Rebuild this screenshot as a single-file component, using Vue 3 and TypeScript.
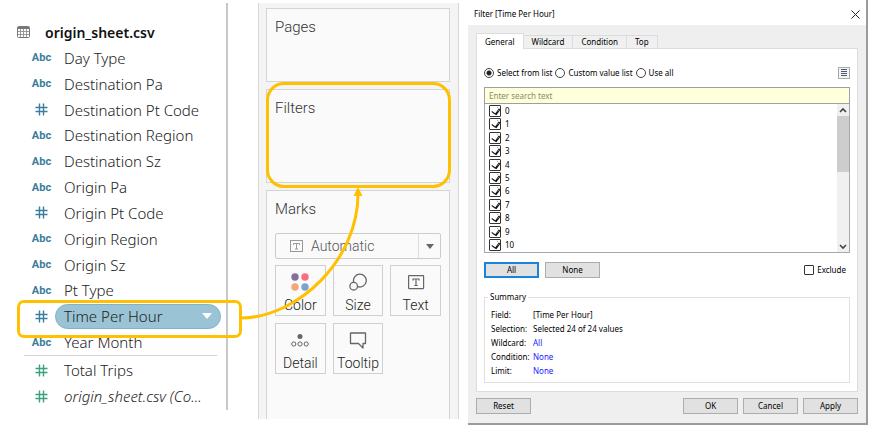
<script setup lang="ts">
import { ref } from 'vue'

type Kind = 'abc' | 'num'
interface Field {
  name: string
  kind: Kind
  active?: boolean
  italic?: boolean
}

const dimensions: Field[] = [
  { name: 'Day Type', kind: 'abc' },
  { name: 'Destination Pa', kind: 'abc' },
  { name: 'Destination Pt Code', kind: 'num' },
  { name: 'Destination Region', kind: 'abc' },
  { name: 'Destination Sz', kind: 'abc' },
  { name: 'Origin Pa', kind: 'abc' },
  { name: 'Origin Pt Code', kind: 'num' },
  { name: 'Origin Region', kind: 'abc' },
  { name: 'Origin Sz', kind: 'abc' },
  { name: 'Pt Type', kind: 'abc' },
  { name: 'Time Per Hour', kind: 'num', active: true },
  { name: 'Year Month', kind: 'abc' },
]
const measures: Field[] = [
  { name: 'Total Trips', kind: 'num' },
  { name: 'origin_sheet.csv (Co...', kind: 'num', italic: true },
]

const tabs = ['General', 'Wildcard', 'Condition', 'Top']
const activeTab = ref('General')
const modes = ['Select from list', 'Custom value list', 'Use all']
const mode = ref('Select from list')
const search = ref('')
const hours = ref(Array.from({ length: 11 }, (_, i) => ({ label: String(i), checked: true })))
const exclude = ref(false)
const mark = ref('Automatic')

const summary = [
  { label: 'Field:', value: '[Time Per Hour]', link: false },
  { label: 'Selection:', value: 'Selected 24 of 24 values', link: false },
  { label: 'Wildcard:', value: 'All', link: true },
  { label: 'Condition:', value: 'None', link: true },
  { label: 'Limit:', value: 'None', link: true },
]

function setAll(value: boolean) {
  hours.value.forEach((h) => (h.checked = value))
}
</script>

<template>
  <main class="page">
    <section class="data">
      <h2 class="source">
        <svg width="13" height="12" viewBox="0 0 13 12" fill="none" stroke="#777">
          <rect x="0.5" y="0.5" width="12" height="11" rx="1" />
          <path d="M1 2H12" stroke-width="2" />
          <path d="M1 5.5H12M1 8.5H12M3.5 3V11M6.5 3V11M9.5 3V11" stroke="#999" />
        </svg>
        <span>origin_sheet.csv</span>
      </h2>
      <ul class="fields dimensions">
        <li v-for="f in dimensions" :key="f.name" class="field" :class="{ active: f.active }">
          <span class="kind">
            <template v-if="f.kind === 'abc'">Abc</template>
            <svg v-else width="13" height="13" viewBox="0 0 13 13" fill="none" stroke="currentColor" stroke-width="1.4">
              <path d="M4.5 0.5V12.5M8.5 0.5V12.5M0.5 4.5H12.5M0.5 8.5H12.5" />
            </svg>
          </span>
          <span class="name">{{ f.name }}
            <button v-if="f.active" class="caret" type="button" aria-label="Field menu">
              <svg width="10" height="6" viewBox="0 0 10 6"><path d="M0 0H10L5 6Z" fill="#fff" /></svg>
            </button>
          </span>
        </li>
      </ul>
      <ul class="fields measures">
        <li v-for="f in measures" :key="f.name" class="field" :class="{ italic: f.italic }">
          <span class="kind">
            <svg width="13" height="13" viewBox="0 0 13 13" fill="none" stroke="currentColor" stroke-width="1.4">
              <path d="M4.5 0.5V12.5M8.5 0.5V12.5M0.5 4.5H12.5M0.5 8.5H12.5" />
            </svg>
          </span>
          <span class="name">{{ f.name }}</span>
        </li>
      </ul>
    </section>

    <section class="shelves">
      <div class="card pages"><h3>Pages</h3></div>
      <div class="card filters"><h3>Filters</h3></div>
      <div class="card marks">
        <h3><label for="mark">Marks</label></h3>
        <div class="picker">
          <svg class="picker-icon" width="13" height="12" viewBox="0 0 13 12" fill="none" stroke="#999">
            <rect x="0.5" y="0.5" width="12" height="11" />
            <path d="M3.5 5V3.5H9.5V5M6.5 3.5V9M5 9H8" />
          </svg>
          <select id="mark" v-model="mark">
            <option>Automatic</option>
          </select>
          <span class="picker-arrow">
            <svg width="8" height="5" viewBox="0 0 8 5"><path d="M0 0H8L4 5Z" fill="#666" /></svg>
          </span>
        </div>
        <div class="tiles">
          <button class="tile" type="button">
            <svg width="18" height="18" viewBox="0 0 18 18">
              <circle cx="4" cy="4" r="3.7" fill="#83709b" />
              <circle cx="14" cy="4" r="3.7" fill="#f96e80" />
              <circle cx="4" cy="14" r="3.7" fill="#f3a77b" />
              <circle cx="14" cy="14" r="3.7" fill="#7ca3cc" />
            </svg>
            <span>Color</span>
          </button>
          <button class="tile" type="button">
            <svg width="18" height="18" viewBox="0 0 18 18" fill="none" stroke="#666" stroke-width="1.3">
              <path d="M4.7 9.2A6.4 6.4 0 1 1 8.8 13.6" />
              <circle cx="4.7" cy="13.2" r="3.8" />
            </svg>
            <span>Size</span>
          </button>
          <button class="tile" type="button">
            <svg width="18" height="18" viewBox="0 0 18 18" fill="none" stroke="#666" stroke-width="1.2">
              <rect x="1.6" y="2.6" width="15" height="13" rx="0.5" />
              <path d="M6 7.5V6H12V7.5M9 6V12.5M7.3 12.5H10.7" />
            </svg>
            <span>Text</span>
          </button>
          <button class="tile" type="button">
            <svg width="18" height="18" viewBox="0 0 18 18" fill="none" stroke="#666">
              <circle cx="9" cy="5.5" r="2.5" fill="#666" stroke="none" />
              <circle cx="2.8" cy="13" r="2.1" />
              <circle cx="9" cy="13" r="2.1" />
              <circle cx="15.2" cy="13" r="2.1" />
            </svg>
            <span>Detail</span>
          </button>
          <button class="tile" type="button">
            <svg width="18" height="18" viewBox="0 0 18 18" fill="none" stroke="#666" stroke-width="1.3">
              <path d="M1.500 2H16.500V12.500H14V17L9.500 12.500H1.500Z" stroke-linejoin="round" />
            </svg>
            <span>Tooltip</span>
          </button>
        </div>
      </div>
    </section>

    <section class="dialog" role="dialog" aria-labelledby="dialog-title">
      <header class="titlebar">
        <h1 id="dialog-title">Filter [Time Per Hour]</h1>
        <button class="close" type="button" aria-label="Close">
          <svg width="9" height="9" viewBox="0 0 9 9" stroke="#222" fill="none"><path d="M0.5 0.5L8.5 8.5M8.5 0.5L0.5 8.5" /></svg>
        </button>
      </header>
      <div class="body">
        <nav class="tabs" role="tablist">
          <button
            v-for="t in tabs"
            :key="t"
            type="button"
            role="tab"
            class="tab"
            :class="{ current: t === activeTab }"
            :aria-selected="t === activeTab"
            @click="activeTab = t"
          >{{ t }}</button>
        </nav>
        <div class="pane">
          <div class="modes">
            <label v-for="m in modes" :key="m" class="mode">
              <input v-model="mode" type="radio" name="mode" :value="m" />{{ m }}
            </label>
            <button class="menu" type="button" aria-label="List options">
              <svg width="6" height="8" viewBox="0 0 6 8" stroke="#4c5a6b"><path d="M0 0.5H6M0 2.5H6M0 4.5H6M0 6.5H6" /></svg>
            </button>
          </div>
          <input v-model="search" class="search" type="text" placeholder="Enter search text" aria-label="Enter search text" />
          <div class="list">
            <div class="items">
              <label v-for="h in hours" :key="h.label" class="item">
                <input v-model="h.checked" class="tick" type="checkbox" />{{ h.label }}
              </label>
            </div>
            <div class="scroll">
              <svg width="8" height="12" viewBox="0 0 8 12" fill="none" stroke="#444" stroke-width="1.6"><path d="M1 8L4 5L7 8" /></svg>
              <span class="thumb"></span>
              <svg width="8" height="12" viewBox="0 0 8 12" fill="none" stroke="#444" stroke-width="1.6"><path d="M1 5L4 8L7 5" /></svg>
            </div>
          </div>
          <div class="actions">
            <button class="btn primary" type="button" @click="setAll(true)">All</button>
            <button class="btn" type="button" @click="setAll(false)">None</button>
            <label class="exclude"><input v-model="exclude" class="tick" type="checkbox" />Exclude</label>
          </div>
          <fieldset class="summary">
            <legend>Summary</legend>
            <dl>
              <template v-for="s in summary" :key="s.label">
                <dt>{{ s.label }}</dt>
                <dd :class="{ link: s.link }">{{ s.value }}</dd>
              </template>
            </dl>
          </fieldset>
        </div>
        <footer class="footer">
          <button class="btn reset" type="button">Reset</button>
          <button class="btn" type="button">OK</button>
          <button class="btn" type="button">Cancel</button>
          <button class="btn" type="button">Apply</button>
        </footer>
      </div>
    </section>

    <svg class="arrow" width="130" height="140" viewBox="0 0 130 140" fill="none">
      <path d="M2 134C58 133 118 76 118 10" stroke="#ffc000" stroke-width="3" />
      <path d="M118 3L122.500 12H113.500Z" fill="#ffc000" />
    </svg>
  </main>
</template>

<style>
body {
  background: #fff;
}
</style>

<style scoped>
* {
  box-sizing: border-box;
}
.page {
  position: relative;
  display: flex;
  align-items: flex-start;
  font-family: Roboto, 'Liberation Sans', sans-serif;
  font-size: 15px;
  font-weight: 300;
  color: #222;
}
h1, h2, h3, ul, dl, dd {
  margin: 0;
  padding: 0;
  font-weight: inherit;
}
button, select, input {
  font: inherit;
  color: inherit;
  margin: 0;
}

/* Data pane */
.data {
  flex: none;
  width: 228px;
  margin-top: 3px;
  padding: 16px 0 1px;
  border-right: 2px solid #c8c8c8;
}
.source {
  display: flex;
  align-items: center;
  gap: 15px;
  height: 26px;
  padding-left: 17px;
  font-family: 'Noto Sans', sans-serif;
  font-size: 14px;
  font-weight: 600;
  color: #111;
}
.fields {
  list-style: none;
  font-family: 'Noto Sans', sans-serif;
  font-size: 15px;
}
.dimensions {
  display: grid;
  grid-auto-rows: 1fr;
  height: 310px;
}
.measures {
  margin: 0 9px 0 24px;
  padding-top: 1px;
  border-top: 1px solid #d4d4d4;
}
.measures .field {
  height: 26px;
}
.measures .kind {
  margin-left: 8px;
  color: #3d9f7c;
}
.measures .name {
  margin-right: 0;
}
.field {
  position: relative;
  display: flex;
  align-items: center;
}
.kind {
  display: flex;
  justify-content: center;
  flex: none;
  width: 19px;
  margin-left: 32px;
  font-family: Roboto, sans-serif;
  font-size: 11px;
  font-weight: 700;
  color: #3a7d9c;
}
.name {
  display: flex;
  align-items: center;
  justify-content: space-between;
  flex: 1;
  height: 25px;
  margin: 0 5px 0 4px;
  padding: 0 8px;
  border: 1px solid transparent;
  border-radius: 13px;
  line-height: 20px;
  white-space: nowrap;
}
.italic {
  font-style: italic;
}
.active .name {
  background: #9ac4d5;
  border-color: #81b2c7;
}
.active::after {
  content: '';
  position: absolute;
  z-index: 1;
  inset: -3px -16px -9px 17px;
  border: 3px solid #ffc000;
  border-radius: 7px;
  pointer-events: none;
}
.caret {
  display: flex;
  padding: 0;
  border: 0;
  background: none;
}

/* Shelves */
.shelves {
  flex: none;
  display: flex;
  flex-direction: column;
  gap: 7px;
  width: 201px;
  margin: 3px 9px 0 30px;
  padding: 5px 8px 0 7px;
  border: solid #d6d6d6;
  border-width: 0 1px;
  background: #f4f4f4;
}
.card {
  position: relative;
  padding: 8px;
  border: 1px solid #d4d4d4;
  background: #fafafa;
}
.card h3 {
  line-height: 20px;
  font-size: 15px;
  color: #333;
}
.pages {
  height: 74px;
}
.filters {
  height: 94px;
}
.filters::after {
  content: '';
  position: absolute;
  inset: -8px -2px -6px -1px;
  border: 3px solid #ffc000;
  border-radius: 18px;
  pointer-events: none;
}
.marks {
  padding-bottom: 45px;
  border-bottom: 0;
}
.picker {
  position: relative;
  display: flex;
  height: 26px;
  margin: 14px 0 6px;
  border: 1px solid #ccc;
  border-radius: 2px;
}
.picker select {
  flex: 1;
  appearance: none;
  padding: 0 0 0 35px;
  border: 0;
  background: none;
  font-size: 14px;
  color: #555;
}
.picker-icon {
  position: absolute;
  left: 14px;
  top: 6px;
}
.picker-arrow {
  position: absolute;
  inset: 0 0 0 auto;
  display: grid;
  place-items: center;
  width: 22px;
  border-left: 1px solid #ddd;
  pointer-events: none;
}
.tiles {
  display: grid;
  grid-template-columns: repeat(3, 1fr);
  gap: 7px;
}
.tile {
  display: flex;
  flex-direction: column;
  align-items: center;
  gap: 5px;
  height: 51px;
  padding: 7px 0 0;
  border: 1px solid #d0d0d0;
  background: #fafafa;
  font-size: 14px;
  line-height: 18px;
  color: #222;
}

/* Filter dialog */
.dialog {
  flex: 1;
  min-width: 360px;
  margin-right: 5px;
  border: solid #9b9b9b;
  border-width: 0 2px 2px 0;
  background: #efefef;
  font-family: 'Noto Sans', sans-serif;
  font-size: 8px;
  font-weight: 400;
  line-height: 12px;
  color: #000;
}
.titlebar {
  display: flex;
  justify-content: space-between;
  align-items: center;
  height: 25px;
  padding: 3px 6px 0;
  background: #fff;
}
.titlebar h1 {
  font-size: 8px;
}
.close {
  display: flex;
  padding: 0;
  border: 0;
  background: none;
}
.body {
  padding: 8px 8px 9px;
}
.tabs {
  display: flex;
  align-items: flex-end;
  height: 15px;
}
.tab {
  position: relative;
  height: 13px;
  padding: 0 8px;
  border: 1px solid #dcdcdc;
  border-width: 1px 1px 0 0;
  background: #f0f0f0;
}
.tab.current {
  z-index: 1;
  height: 16px;
  margin-bottom: -1px;
  border-left-width: 1px;
  background: #fff;
}
.pane {
  padding: 17px 7px 8px;
  border: 1px solid #dcdcdc;
  background: #fff;
}
.modes {
  display: flex;
  align-items: center;
  gap: 3px;
  height: 13px;
  margin-bottom: 8px;
}
.mode {
  display: flex;
  align-items: center;
  gap: 3px;
  white-space: nowrap;
}
.mode input {
  appearance: none;
  width: 10px;
  height: 10px;
  border: 1px solid #444;
  border-radius: 50%;
  background: #fff;
}
.mode input:checked {
  background: radial-gradient(circle, #222 0 2px, #fff 3px);
}
.menu {
  display: grid;
  place-items: center;
  width: 12px;
  height: 12px;
  margin-left: auto;
  padding: 0;
  border: 1px solid #aaa;
  background: #f2f2f2;
}
.search {
  display: block;
  width: 100%;
  height: 17px;
  padding: 0 4px;
  border: 1px solid #9a9fa8;
  border-radius: 0;
  background: #ffffd9;
}
.search::placeholder {
  color: #8a8a72;
  opacity: 1;
}
.list {
  display: flex;
  height: 149px;
  border: 1px solid #a5a8b2;
  border-top: 0;
}
.items {
  flex: 1;
  display: grid;
  grid-auto-rows: 1fr;
  padding-left: 4px;
}
.item {
  display: flex;
  align-items: center;
  gap: 4px;
}
.tick {
  appearance: none;
  display: grid;
  place-items: center;
  width: 12px;
  height: 12px;
  border: 1px solid #333;
  border-radius: 1px;
  background: #fff;
}
.tick:checked::before {
  content: '';
  width: 4px;
  height: 6px;
  margin-top: -1px;
  border: solid #111;
  border-width: 0 1px 1px 0;
  box-shadow: 1px 0 #111;
  rotate: 35deg;
}
.scroll {
  display: flex;
  flex-direction: column;
  align-items: center;
  width: 12px;
  background: #f0f0f0;
}
.scroll svg:last-child {
  margin-top: auto;
}
.thumb {
  width: 100%;
  height: 56px;
  background: #cdcdcd;
}
.actions {
  display: flex;
  align-items: center;
  gap: 6px;
  margin: 9px 0 13px;
}
.btn {
  width: 55px;
  height: 16px;
  padding: 0;
  border: 1px solid #adadad;
  background: #e1e1e1;
}
.btn.primary {
  border: 2px solid #1a84da;
}
.exclude {
  display: flex;
  align-items: center;
  gap: 3px;
  margin-left: auto;
  padding-right: 4px;
}
.exclude .tick {
  width: 10px;
  height: 10px;
}
.summary {
  margin: 0;
  padding: 5px 6px 4px;
  border: 1px solid #e0e0e0;
}
.summary legend {
  margin-left: -3px;
  padding: 0 2px;
}
.summary dl {
  display: grid;
  grid-template-columns: 42px 1fr;
  line-height: 14px;
}
.link {
  color: #1a1aff;
}
.footer {
  display: flex;
  gap: 5px;
  margin-top: 6px;
}
.reset {
  margin-right: auto;
}
.arrow {
  position: absolute;
  left: 240px;
  top: 184px;
  pointer-events: none;
}
</style>
